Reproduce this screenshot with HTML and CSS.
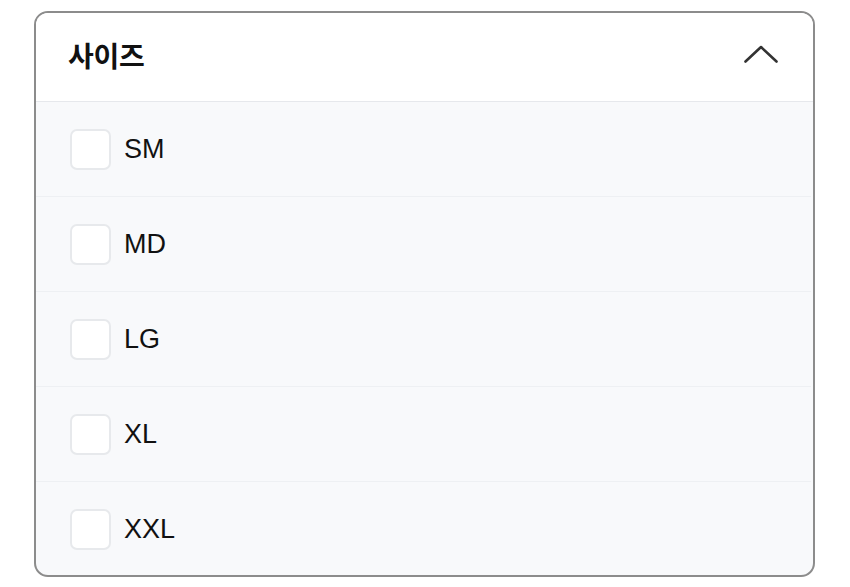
FILE: index.html
```html
<!DOCTYPE html>
<html lang="ko">
<head>
    <meta charset="UTF-8">
    <meta name="viewport" content="width=device-width, initial-scale=1.0">
    <title>사이즈 필터</title>
    <link rel="stylesheet" href="styles.css">
</head>
<body>
    <div class="filtro">
        <div class="filtro-header">
            <h2>사이즈</h2>
            <svg class="chevron" width="34" height="18" viewBox="0 0 34 18">
                <path d="M1.5 16.5 L17 2 L32.5 16.5" fill="none" stroke="#333" stroke-width="2.6" stroke-linecap="round" stroke-linejoin="round"/>
            </svg>
        </div>
        <ul class="filtro-lista">
            <li><label><span class="caixa"></span>SM</label></li>
            <li><label><span class="caixa"></span>MD</label></li>
            <li><label><span class="caixa"></span>LG</label></li>
            <li><label><span class="caixa"></span>XL</label></li>
            <li><label><span class="caixa"></span>XXL</label></li>
        </ul>
    </div>
</body>
</html>
```

FILE: styles.css
```css
body {
    margin: 0;
    padding: 11px 0 0 34px;
    background: #ffffff;
    font-family: "Liberation Sans", Arial, "Noto Sans CJK KR", sans-serif;
    color: #111;
}

.filtro {
    width: 781px;
    height: 566px;
    box-sizing: border-box;
    border: 2px solid #8c8c8c;
    border-radius: 14px;
    overflow: hidden;
    background: #f8f9fb;
}

.filtro-header {
    height: 89px;
    box-sizing: border-box;
    display: flex;
    align-items: center;
    justify-content: space-between;
    padding: 0 35px 0 32px;
    background: #ffffff;
    border-bottom: 1px solid #e6e8ec;
}

.filtro-header h2 {
    margin: 0 0 5px 0;
    font-family: "Noto Sans CJK KR", sans-serif;
    font-size: 28px;
    font-weight: 700;
    letter-spacing: -0.3px;
}

.chevron {
    display: block;
    margin-bottom: 6px;
}

.filtro-lista {
    list-style: none;
    margin: 0;
    padding: 0;
}

.filtro-lista li {
    height: 95px;
    box-sizing: border-box;
    border-bottom: 1px solid #eef0f3;
    margin-right: 2px;
}

.filtro-lista li:last-child {
    border-bottom: none;
}

.filtro-lista label {
    height: 100%;
    display: flex;
    align-items: center;
    padding-left: 34px;
    font-size: 27px;
    cursor: pointer;
}

.caixa {
    width: 41px;
    height: 41px;
    box-sizing: border-box;
    border: 2px solid #e7e9ec;
    border-radius: 7px;
    background: #ffffff;
    margin-right: 13px;
}
```
